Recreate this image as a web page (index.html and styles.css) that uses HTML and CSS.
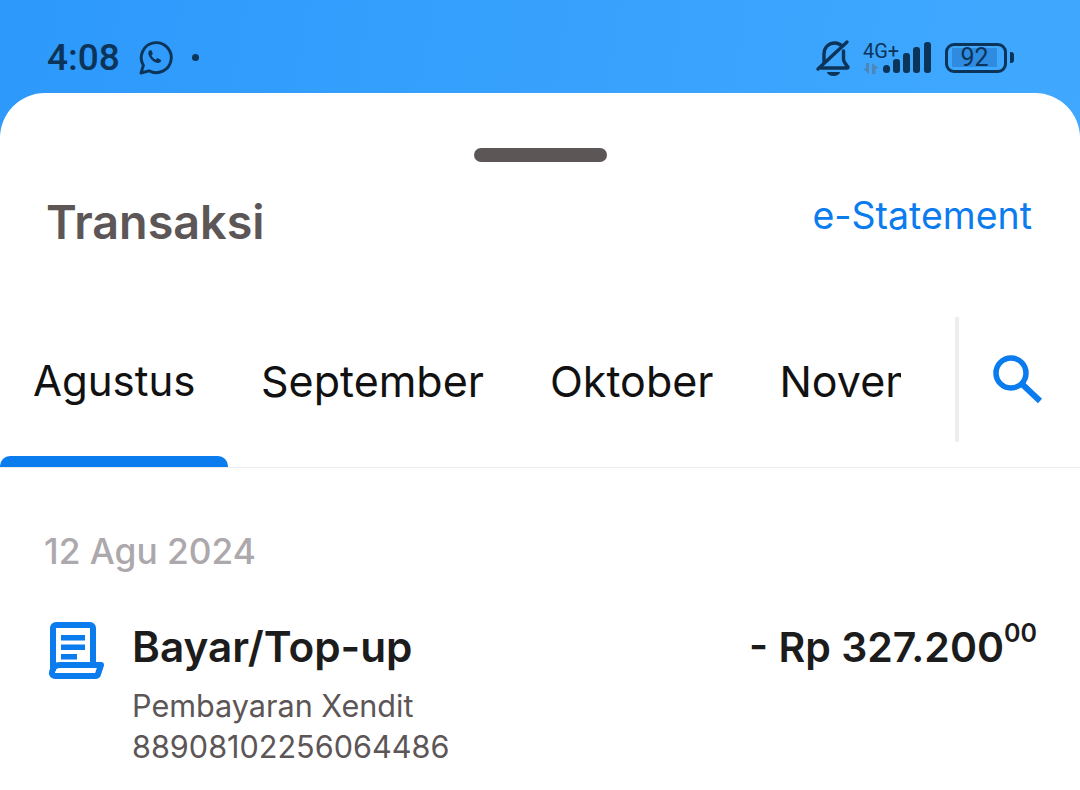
FILE: index.html
```html
<!DOCTYPE html>
<html lang="en">
<head>
    <meta charset="UTF-8">
    <title>Transaksi</title>
    <link rel="stylesheet" href="styles.css">
</head>
<body>
    <div class="statusbar">
        <div class="status-left">
            <span class="clock">4:08</span>
            <svg class="wa-icon" width="36" height="36" viewBox="0 0 36 36" fill="none">
                <path d="M4 33l2.400-7.600A15 15 0 1 1 12 30.800z" stroke="#0c3358" stroke-width="2.900" stroke-linejoin="round"/>
                <path d="M12.500 10.500c-1.800 1.600-1.600 4 .4 7 2 2.900 4.700 5 7.400 5.400 2 .3 3.700-1 4-2.700l-3.800-2.200-1.800 1.700c-1.700-.6-3.400-2.300-4.300-4.200l1.500-1.800-1.700-3.600z" fill="#0c3358"/>
            </svg>
            <span class="dot"></span>
        </div>
        <div class="status-right">
            <svg class="bell-icon" width="36" height="38" viewBox="0 0 36 38" fill="none" stroke="#0c3358" stroke-width="3.400" stroke-linecap="round" stroke-linejoin="round">
                <path d="M9 23V15C9 8 14 4 20 4c3 0 5 1 7 3"/>
                <path d="M28.500 12v8c0 3 2 5 4.500 8q0 1-1 1H6"/>
                <path d="M3 30L32 3"/>
                <path d="M12 33h13a6.500 4 0 0 1-13 0z" fill="#0c3358" stroke="none"/>
            </svg>
            <div class="network">
                <span class="net-type">4G+</span>
                <svg class="net-arrows" width="17" height="11" viewBox="0 0 17 11" fill="#4f86b8">
                    <path d="M3 0h3v11L0 5.500h3zM9 0l7 5.500h-3.500V11H9z"/>
                </svg>
            </div>
            <svg class="signal-icon" width="48" height="31" viewBox="0 0 48 31" fill="#0c3358">
                <rect x="0" y="23" width="7" height="8" rx="3.500"/>
                <rect x="10" y="17" width="7" height="14" rx="3"/>
                <rect x="20" y="11" width="7" height="20" rx="3"/>
                <rect x="30" y="5" width="7" height="26" rx="3"/>
                <rect x="41" y="0" width="7" height="31" rx="3"/>
            </svg>
            <div class="battery">
                <div class="battery-body"><span class="battery-level">92</span></div>
                <span class="battery-cap"></span>
            </div>
        </div>
    </div>

    <div class="sheet">
        <div class="handle"></div>
        <div class="title-row">
            <div class="title">Transaksi</div>
            <a class="statement" href="#">e-Statement</a>
        </div>

        <div class="tabs-row">
            <div class="tabs">
                <div class="tab active">Agustus</div>
                <div class="tab">September</div>
                <div class="tab">Oktober</div>
                <div class="tab">November</div>
            </div>
            <div class="search-box">
                <svg width="50" height="50" viewBox="0 0 50 50" fill="none" stroke="#0a7cee" stroke-width="5.500">
                    <circle cx="18" cy="18" r="15"/>
                    <path d="M29.500 29.500L47 46" stroke-width="6"/>
                </svg>
            </div>
        </div>

        <div class="date">12 Agu 2024</div>

        <div class="trx">
            <svg class="trx-icon" width="58" height="58" viewBox="0 0 58 58" fill="none">
                <path d="M6 49V6a3 3 0 0 1 3-3h34a3 3 0 0 1 3 3v36" stroke="#0a7cee" stroke-width="6"/>
                <path d="M14 13h24v5.500H14zM14 22.500h24V28H14zM14 32h16v5.500H14z" fill="#0a7cee"/>
                <path d="M13 43h41l-3 9a2 2 0 0 1-2 2H8a3 3 0 0 1-3-4q1-7 8-7z" stroke="#0a7cee" stroke-width="6" stroke-linejoin="round"/>
            </svg>
            <div class="trx-info">
                <div class="trx-name">Bayar/Top-up</div>
                <div class="trx-desc">Pembayaran Xendit</div>
                <div class="trx-desc">88908102256064486</div>
            </div>
            <div class="trx-amount">- Rp 327.200<sup class="cents">00</sup></div>
        </div>
    </div>
</body>
</html>
```

FILE: styles.css
```css
body {
    margin: 0;
    height: 790px;
    overflow: hidden;
    font-family: Inter, "Noto Sans", sans-serif;
    background: linear-gradient(100deg, #2d99fb, #42aaff);
    display: flex;
    flex-direction: column;
}
.statusbar {
    height: 93px;
    box-sizing: border-box;
    padding: 22px 66px 0 47px;
    display: flex;
    justify-content: space-between;
    align-items: center;
    color: #0c3358;
}
.status-left, .status-right {
    display: flex;
    align-items: center;
}
.clock {
    font-family: Roboto, sans-serif;
    font-size: 37px;
    font-weight: 500;
}
.wa-icon {
    margin-left: 17px;
}
.dot {
    width: 7px;
    height: 7px;
    margin-left: 19px;
    border-radius: 50%;
    background: #0c3358;
}
.network {
    display: flex;
    flex-direction: column;
    width: 36px;
    margin-left: 12px;
}
.net-type {
    font-family: Roboto, sans-serif;
    font-size: 20px;
    line-height: 20px;
}
.net-arrows {
    margin-top: 2px;
}
.signal-icon {
    margin-left: -16px;
}
.battery {
    display: flex;
    align-items: center;
    margin-left: 14px;
}
.battery-body {
    width: 62px;
    height: 30px;
    box-sizing: border-box;
    border: 3px solid #0c3358;
    border-radius: 9px;
    padding: 2px 7px 3px 4px;
    display: flex;
}
.battery-level {
    flex: 1;
    background: #2f8be0;
    font-family: Roboto, sans-serif;
    font-size: 25px;
    line-height: 19px;
    text-align: center;
}
.battery-cap {
    width: 4px;
    height: 11px;
    margin-left: 3px;
    border-radius: 0 3px 3px 0;
    background: #0c3358;
}
.sheet {
    flex: 1;
    background: #fff;
    border-radius: 45px 45px 0 0;
    display: flex;
    flex-direction: column;
}
.handle {
    align-self: center;
    width: 133px;
    height: 14px;
    margin-top: 55px;
    border-radius: 7px;
    background: #5c5657;
}
.title-row {
    display: flex;
    justify-content: space-between;
    align-items: flex-start;
    padding: 0 48px 0 46px;
    margin-top: 30px;
}
.title {
    font-size: 46.700px;
    line-height: 60px;
    font-weight: 600;
    color: #5c5657;
}
.statement {
    font-size: 37.500px;
    line-height: 48px;
    color: #0a7cee;
    text-decoration: none;
}
.tabs-row {
    display: flex;
    height: 150px;
    margin-top: 65px;
    border-bottom: 1px solid #ececec;
}
.tabs {
    flex-shrink: 0;
    width: 901px;
    display: flex;
    overflow: hidden;
    align-items: stretch;
}
.tab {
    flex-shrink: 0;
    padding: 0 33px;
    font-size: 43px;
    line-height: 128px;
    color: #111;
    box-sizing: border-box;
    height: 150px;
}
.tab.active {
    position: relative;
    width: 228px;
    padding: 0 0 0 33px;
    font-size: 42px;
}
.tab.active::after {
    content: "";
    position: absolute;
    left: 0;
    right: 0;
    bottom: 0;
    height: 11px;
    border-radius: 10px 10px 0 0;
    background: #0a7cee;
}
.search-box {
    flex-shrink: 0;
    box-sizing: border-box;
    margin-left: 54px;
    width: 125px;
    height: 125px;
    padding-right: 4px;
    border-left: 4px solid #eeeeee;
    display: flex;
    justify-content: center;
    align-items: center;
}
.date {
    margin: 62px 0 0 44px;
    font-size: 35.300px;
    line-height: 44px;
    font-weight: 500;
    color: #aca8ac;
}
.trx {
    display: flex;
    margin: 48px 43px 0 47px;
}
.trx-icon {
    flex-shrink: 0;
}
.trx-info {
    margin-left: 27px;
    flex: 1;
}
.trx-name {
    font-size: 42.300px;
    line-height: 50px;
    font-weight: 600;
    color: #1c1c1c;
    margin-bottom: 13px;
}
.trx-desc {
    font-size: 30.600px;
    line-height: 41px;
    color: #5c5657;
}
.trx-amount {
    font-size: 41px;
    line-height: 50px;
    font-weight: 600;
    color: #1c1c1c;
}
.cents {
    font-size: 25px;
    line-height: 0;
    vertical-align: 20px;
}
```
